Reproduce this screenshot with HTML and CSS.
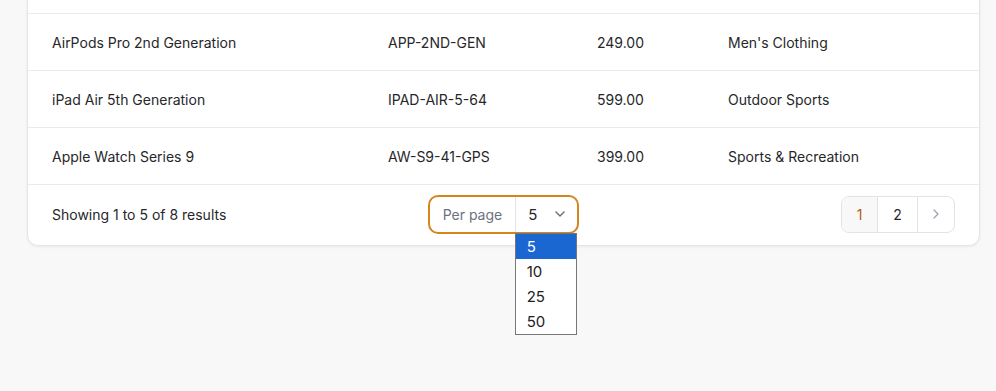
FILE: index.html
```html
<!DOCTYPE html>
<html lang="en">
<head>
<meta charset="utf-8">
<title>Products</title>
<link rel="stylesheet" href="styles.css">
</head>
<body>
<div class="page">
  <div class="card">
    <table class="table">
      <colgroup>
        <col class="c1"><col class="c2"><col class="c3"><col class="c4">
      </colgroup>
      <tbody>
        <tr class="spacer" aria-hidden="true"><td></td><td></td><td></td><td></td></tr>
        <tr><td>AirPods Pro 2nd Generation</td><td>APP-2ND-GEN</td><td>249.00</td><td>Men's Clothing</td></tr>
        <tr><td>iPad Air 5th Generation</td><td>IPAD-AIR-5-64</td><td>599.00</td><td>Outdoor Sports</td></tr>
        <tr><td>Apple Watch Series 9</td><td>AW-S9-41-GPS</td><td>399.00</td><td>Sports &amp; Recreation</td></tr>
      </tbody>
    </table>
    <div class="footer">
      <div class="summary">Showing 1 to 5 of 8 results</div>
      <div class="perpage">
        <span class="perpage-label">Per page</span>
        <span class="perpage-select">
          <span class="perpage-value">5</span>
          <svg class="chev-down" width="10" height="6" viewBox="0 0 10 6" fill="none"><path d="M1 1l4 4 4-4" stroke="#6b7280" stroke-width="1.5" stroke-linecap="round" stroke-linejoin="round"/></svg>
        </span>
        <ul class="options">
          <li class="option selected">5</li>
          <li class="option">10</li>
          <li class="option">25</li>
          <li class="option">50</li>
        </ul>
      </div>
      <div class="pager-wrap">
        <nav class="pager">
          <span class="pbtn current">1</span>
          <span class="pbtn">2</span>
          <span class="pbtn next"><svg width="6" height="10" viewBox="0 0 6 10" fill="none"><path d="M1 1l4 4-4 4" stroke="#9ca3af" stroke-width="1.3" stroke-linecap="round" stroke-linejoin="round"/></svg></span>
        </nav>
      </div>
    </div>
  </div>
</div>
</body>
</html>
```

FILE: styles.css
```css
* { box-sizing: border-box; }
html, body { margin: 0; padding: 0; }
body {
  background: #f8f8f8;
  font-family: Inter, "Liberation Sans", sans-serif;
  font-size: 14px;
  color: #27272a;
  height: 391px;
  overflow: hidden;
}
.page {
  padding: 0 16px 0 27px;
}
.card {
  margin-top: -45px;
  background: #fff;
  border: 1px solid #e5e5e5;
  border-radius: 11px;
  box-shadow: 0 1px 3px rgba(0,0,0,0.06);
}
.table {
  width: 100%;
  border-collapse: collapse;
  table-layout: fixed;
}
.c1 { width: 336px; }
.c2 { width: 209px; }
.c3 { width: 131px; }
.table td {
  height: 57px;
  padding: 1px 24px 0;
  border-bottom: 1px solid #ebebeb;
  vertical-align: middle;
  white-space: nowrap;
}
.footer {
  display: grid;
  grid-template-columns: 1fr auto 1fr;
  align-items: center;
  padding: 10px 24px 11px;
}
.summary { color: #27272a; padding-top: 1px; }
.perpage {
  position: relative;
  display: flex;
  align-items: stretch;
  height: 39px;
  border: 2px solid #d4861c;
  border-radius: 10px;
}
.perpage-label {
  display: flex;
  align-items: center;
  padding: 0 13px;
  color: #6b7280;
  border-right: 1px solid #e5e5e5;
}
.perpage-select {
  display: flex;
  align-items: center;
  gap: 18px;
  padding: 0 12px 0 12px;
  font-size: 15px;
}
.chev-down { display: block; }
.options {
  position: absolute;
  left: 85px;
  top: calc(100% + 1px);
  width: 62px;
  margin: 0;
  padding: 0;
  list-style: none;
  background: #fff;
  border: 1px solid #767676;
  font-size: 15px;
}
.option {
  height: 25px;
  line-height: 25px;
  padding-left: 11px;
  color: #222;
}
.option.selected {
  background: #1a67d2;
  color: #fff;
}
.pager-wrap {
  display: flex;
  justify-content: flex-end;
}
.pager {
  display: flex;
  height: 37px;
  border: 1px solid #e3e3e3;
  border-radius: 8px;
  overflow: hidden;
}
.pbtn {
  display: flex;
  align-items: center;
  justify-content: center;
  width: 40px;
  color: #27272a;
  border-left: 1px solid #e3e3e3;
}
.pbtn:first-child { border-left: none; }
.pbtn.current {
  width: 35px;
  background: #f8f8f8;
  color: #b45a1c;
}
.pbtn.next { width: 37px; }
```
